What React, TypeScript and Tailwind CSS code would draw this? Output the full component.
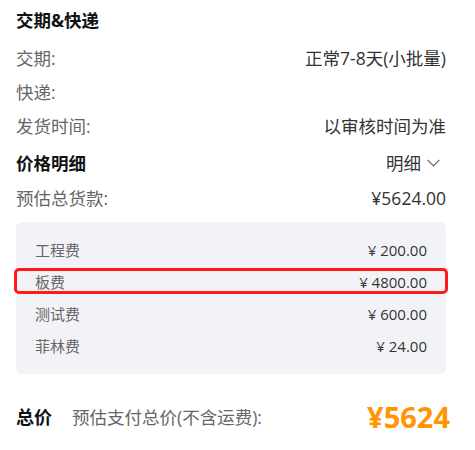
import React from "react";

const font = { fontFamily: '"Open Sans", "Noto Sans CJK SC", "Noto Sans", sans-serif' };

function Row({ label, value }: { label: string; value?: string }) {
  return (
    <div className="flex h-[34px] items-center justify-between text-[17.5px]">
      <span className="text-[#666666]">{label}</span>
      {value && <span className="text-[#333333]">{value}</span>}
    </div>
  );
}

function Fee({ label, value, highlight }: { label: string; value: string; highlight?: boolean }) {
  return (
    <div className="relative flex h-[32px] items-center justify-between px-[19px] text-[15px]">
      {highlight && (
        <div className="absolute left-[-2px] right-[-2px] top-[2px] bottom-[4px] rounded-[5px] border-[3px] border-[#ff1a1a]" />
      )}
      <span className="text-[#666666]">{label}</span>
      <span className="text-[#333333]">{value}</span>
    </div>
  );
}

export default function App() {
  return (
    <div className="h-[450px] w-[475px] bg-white" style={font}>
      <div className="ml-4 w-[430px]">
        <div className="flex h-[41px] items-center text-[17.5px] font-bold text-[#111111]">交期&amp;快递</div>
        <Row label="交期:" value="正常7-8天(小批量)" />
        <Row label="快递:" />
        <Row label="发货时间:" value="以审核时间为准" />
        <div className="flex h-[40px] items-center justify-between">
          <span className="text-[17.5px] font-bold text-[#111111]">价格明细</span>
          <span className="flex items-center gap-[6px] pr-[6px] text-[17.5px] text-[#333333]">
            明细
            <svg width="13" height="8" viewBox="0 0 13 8" fill="none">
              <path d="M0.5 0.8 L6.5 6.8 L12.5 0.8" stroke="#666666" strokeWidth="1.2" />
            </svg>
          </span>
        </div>
        <div className="flex h-[30px] items-center justify-between text-[17.5px]">
          <span className="text-[#666666]">预估总货款:</span>
          <span className="text-[#333333]">¥5624.00</span>
        </div>
        <div className="mt-[9px] rounded-[6px] bg-[#f2f3f7] pt-[12px] pb-[12px]">
          <Fee label="工程费" value="¥ 200.00" />
          <Fee label="板费" value="¥ 4800.00" highlight />
          <Fee label="测试费" value="¥ 600.00" />
          <Fee label="菲林费" value="¥ 24.00" />
        </div>
        <div className="mt-[20px] flex h-[46px] items-center">
          <span className="text-[18px] font-bold text-[#111111]">总价</span>
          <span className="ml-[20px] text-[17.5px] text-[#666666]">预估支付总价(不含运费):</span>
          <span className="ml-auto mr-[-4px] text-[29px] font-bold text-[#ff9500]">¥5624</span>
        </div>
      </div>
    </div>
  );
}
